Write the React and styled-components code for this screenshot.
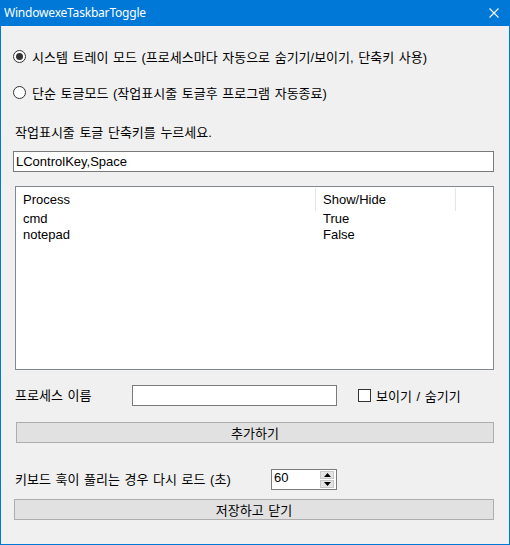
import React from "react";
import styled, { createGlobalStyle } from "styled-components";

const Global = createGlobalStyle`
  html, body { margin: 0; padding: 0; background: #f0f0f0; }
  * { box-sizing: border-box; }
`;

const FONT = `"Liberation Sans", "Noto Sans CJK KR", sans-serif`;

const Window = styled.div`
  width: 510px;
  height: 545px;
  border: 1px solid #0078d7;
  border-top: none;
  background: #f0f0f0;
  display: flex;
  flex-direction: column;
  font-family: ${FONT};
  font-size: 13px;
  word-spacing: 1px;
  color: #000;
`;

const TitleBar = styled.div`
  height: 26px;
  margin: 0 -1px;
  background: #0078d7;
  color: #fff;
  display: flex;
  align-items: center;
  justify-content: space-between;
  padding: 0 11px 2px 4px;
  font-family: "Noto Sans", sans-serif;
  font-size: 12px;
  letter-spacing: -0.2px;
  word-spacing: 0;
`;

const CloseIcon = styled.svg`
  width: 10px;
  height: 10px;
  margin-top: 2px;
`;

const Client = styled.div`
  flex: 1;
  display: flex;
  flex-direction: column;
`;

const RadioRow = styled.label`
  display: flex;
  align-items: center;
  height: 16px;
  margin: ${(p) => p.$top}px 0 0 12px;
  gap: 6px;
  white-space: nowrap;
`;

const RadioCircle = styled.span`
  width: 13px;
  height: 13px;
  border-radius: 50%;
  border: 1px solid #333;
  background: #fff;
  display: flex;
  align-items: center;
  justify-content: center;
  flex: none;
  &::after {
    content: "";
    width: 7px;
    height: 7px;
    border-radius: 50%;
    background: ${(p) => (p.$checked ? "#333" : "transparent")};
  }
`;

const Label = styled.div`
  height: 16px;
  line-height: 16px;
  width: ${(p) => (p.$w ? `${p.$w}px` : "auto")};
  flex: none;
  margin: ${(p) => p.$top || 0}px 0 0 ${(p) => p.$left ?? 14}px;
  white-space: nowrap;
`;

const TextBox = styled.div`
  height: 21px;
  width: ${(p) => p.$w}px;
  margin: ${(p) => p.$top || 0}px 0 0 ${(p) => p.$left || 0}px;
  border: 1px solid #7a7a7a;
  background: #fff;
  padding: 0 2px;
  line-height: 19px;
  white-space: nowrap;
  flex: none;
`;

const ListView = styled.div`
  width: 479px;
  height: 184px;
  margin: 14px 0 0 14px;
  border: 1px solid #828790;
  background: #fff;
  display: flex;
  flex-direction: column;
`;

const HeaderRow = styled.div`
  display: grid;
  grid-template-columns: 300px 140px;
  height: 24px;
  padding-top: 1px;
`;

const HeaderCell = styled.div`
  border-right: 1px solid #e5e5e5;
  padding-left: 7px;
  line-height: 23px;
`;

const Row = styled.div`
  display: grid;
  grid-template-columns: 300px 140px;
  height: 16px;
  line-height: 16px;
`;

const Cell = styled.div`
  padding-left: 7px;
`;

const FormRow = styled.div`
  display: flex;
  align-items: center;
  height: 21px;
  margin: ${(p) => p.$top}px 0 0 0;
`;

const CheckLabel = styled.label`
  display: flex;
  align-items: center;
  gap: 5px;
  margin-left: 21px;
  white-space: nowrap;
`;

const CheckBox = styled.span`
  width: 13px;
  height: 13px;
  border: 1px solid #333;
  background: #fff;
  flex: none;
`;

const Button = styled.div`
  height: 21px;
  width: ${(p) => p.$w}px;
  margin: ${(p) => p.$top}px 0 0 ${(p) => p.$left}px;
  background: #e1e1e1;
  border: 1px solid #adadad;
  display: flex;
  align-items: center;
  justify-content: center;
`;

const Spin = styled.div`
  width: 66px;
  height: 21px;
  border: 1px solid #7a7a7a;
  background: #fff;
  display: flex;
  align-items: stretch;
  padding: 0 2px 0 2px;
  flex: none;
`;

const SpinText = styled.div`
  flex: 1;
  line-height: 16px;
`;

const SpinButtons = styled.div`
  display: flex;
  flex-direction: column;
  gap: 1px;
  width: 14px;
  padding: 1px 0;
`;

const SpinBtn = styled.div`
  flex: 1;
  background: #e5e5e5;
  border: 1px solid #c9c9c9;
  display: flex;
  align-items: center;
  justify-content: center;
`;

const Arrow = ({ up }) => (
  <svg width="7" height="4" viewBox="0 0 7 4">
    <path d={up ? "M0 4 L3.5 0 L7 4 Z" : "M0 0 L3.5 4 L7 0 Z"} fill="#000" />
  </svg>
);

export default function App() {
  return (
    <>
      <Global />
      <Window>
        <TitleBar>
          <span>WindowexeTaskbarToggle</span>
          <CloseIcon viewBox="0 0 10 10">
            <path d="M0.5 0.5 L9.5 9.5 M9.5 0.5 L0.5 9.5" stroke="#fff" strokeWidth="1.1" />
          </CloseIcon>
        </TitleBar>
        <Client>
          <RadioRow $top={22}>
            <RadioCircle $checked />
            <span>시스템 트레이 모드 (프로세스마다 자동으로 숨기기/보이기, 단축키 사용)</span>
          </RadioRow>
          <RadioRow $top={20}>
            <RadioCircle />
            <span>단순 토글모드 (작업표시줄 토글후 프로그램 자동종료)</span>
          </RadioRow>
          <Label $top={25}>작업표시줄 토글 단축키를 누르세요.</Label>
          <TextBox $top={10} $left={12} $w={481}>LControlKey,Space</TextBox>
          <ListView>
            <HeaderRow>
              <HeaderCell>Process</HeaderCell>
              <HeaderCell>Show/Hide</HeaderCell>
            </HeaderRow>
            <Row>
              <Cell>cmd</Cell>
              <Cell>True</Cell>
            </Row>
            <Row>
              <Cell>notepad</Cell>
              <Cell>False</Cell>
            </Row>
          </ListView>
          <FormRow $top={15}>
            <Label $w={117}>프로세스 이름</Label>
            <TextBox $w={205} />
            <CheckLabel>
              <CheckBox />
              <span>보이기 / 숨기기</span>
            </CheckLabel>
          </FormRow>
          <Button $top={16} $left={15} $w={478}>추가하기</Button>
          <FormRow $top={26}>
            <Label $w={256}>키보드 훅이 풀리는 경우 다시 로드 (초)</Label>
            <Spin>
              <SpinText>60</SpinText>
              <SpinButtons>
                <SpinBtn><Arrow up /></SpinBtn>
                <SpinBtn><Arrow /></SpinBtn>
              </SpinButtons>
            </Spin>
          </FormRow>
          <Button $top={9} $left={13} $w={480}>저장하고 닫기</Button>
        </Client>
      </Window>
    </>
  );
}
